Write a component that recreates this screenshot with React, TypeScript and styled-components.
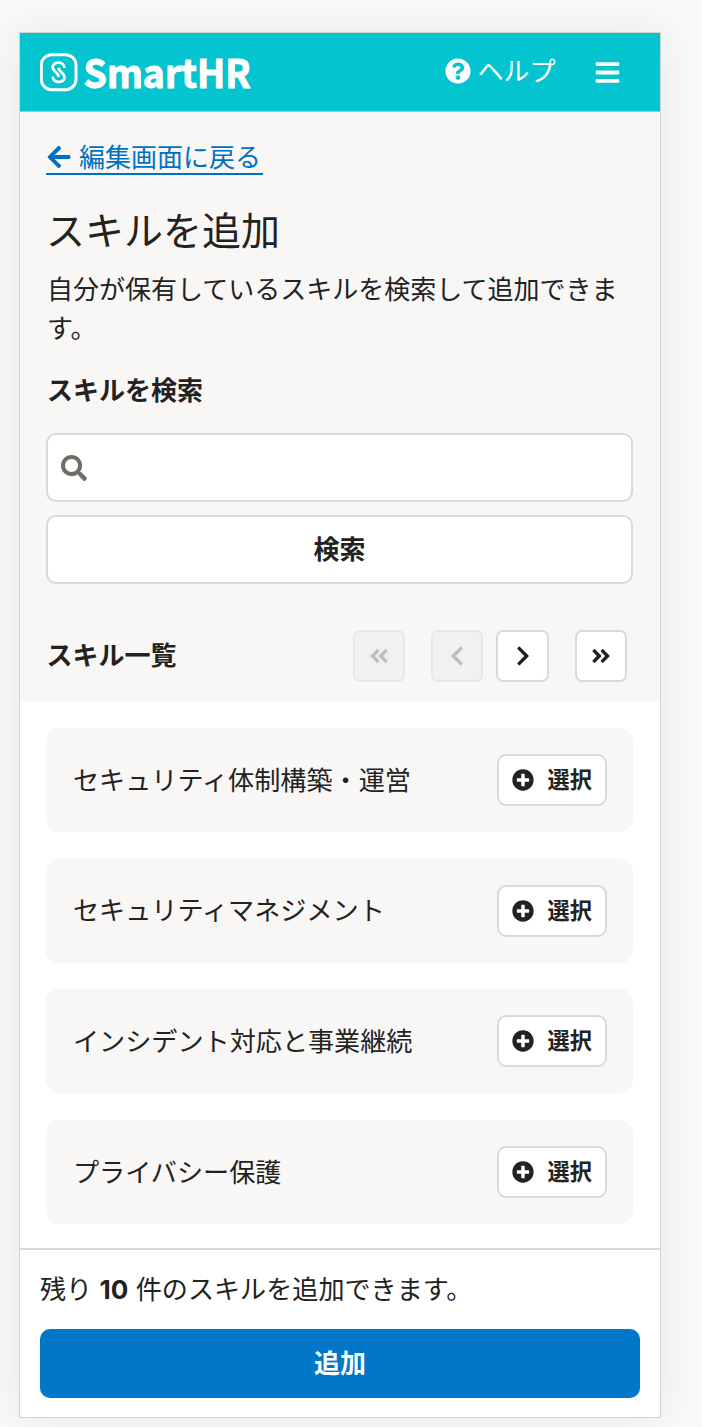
import React from "react";
import styled, { createGlobalStyle, css } from "styled-components";
import {
  FaAngleDoubleLeft,
  FaAngleDoubleRight,
  FaArrowLeft,
  FaBars,
  FaChevronLeft,
  FaChevronRight,
  FaPlusCircle,
  FaQuestionCircle,
  FaSearch,
} from "react-icons/fa";

const GlobalStyle = createGlobalStyle`
  *, *::before, *::after { box-sizing: border-box; }
  html { background: #f8fafa; }
  body {
    margin: 0;
    color: #23221e;
    font-family: Inter, "Noto Sans CJK JP", sans-serif;
    font-size: 26px;
    line-height: 39px;
    overflow: hidden;
  }
  button, input { font: inherit; color: inherit; }
  svg { display: block; flex: none; }
  h1, h2, p, ul { margin: 0; padding: 0; }
`;

const Stage = styled.div`
  height: 1427px;
  padding: 32px 41px 9px 19px;
  overflow: hidden;
`;

const Screen = styled.main`
  display: flex;
  flex-direction: column;
  height: 1386px;
  background: #fff;
  border: 1px solid #d1d3d3;
  box-shadow: 0 0 40px rgba(0, 0, 0, 0.075);
`;

const Header = styled.header`
  display: flex;
  align-items: center;
  height: 79px;
  padding: 0 39px 0 20px;
  background: #04c4cf;
  border-bottom: 1px solid #6fdce2;
  color: #fff;
`;

const HelpLink = styled.a`
  display: flex;
  align-items: center;
  gap: 6px;
  margin: -1px 38.5px 0 auto;
  svg {
    margin-top: -2px;
  }
`;

const SearchSection = styled.section`
  height: 589px;
  padding: 26px 27px 0 27px;
  background: #f8f7f5;
`;

const BackLink = styled.a`
  display: inline-flex;
  align-items: center;
  gap: 7px;
  height: 37px;
  padding: 3px 2px 0 0;
  margin-left: -1px;
  border-bottom: 2px solid #0071c1;
  color: #0071c1;
`;

const Title = styled.h1`
  margin: 25px 0 0 -1px;
  font-size: 39px;
  line-height: 52px;
  font-weight: 400;
`;

const Description = styled.p`
  margin: 13px -6px 23px 0;
`;

const Label = styled.h2`
  font-size: 26px;
  line-height: 39px;
  font-weight: 700;
`;

const outlined = css`
  background: #fff;
  border: 2px solid #dad9d6;
`;

const SearchField = styled.div`
  ${outlined}
  display: flex;
  align-items: center;
  gap: 12px;
  height: 69px;
  margin: 23px 0 0 -1px;
  padding: 0 13px;
  border-radius: 10px;
  color: #706d65;
`;

const SearchInput = styled.input`
  flex: 1;
  min-width: 0;
  padding: 0;
  border: 0;
  outline: 0;
  background: transparent;
`;

const WideButton = styled.button<{ $primary?: boolean }>`
  ${outlined}
  display: block;
  width: 100%;
  height: 69px;
  padding: 0;
  border-radius: 10px;
  font-weight: 700;
  ${({ $primary }) =>
    $primary &&
    css`
      background: #0077c7;
      border: 0;
      color: #fff;
    `}
`;

const SearchAction = styled.div`
  margin: 13px 0 0 -1px;
`;

const ListHeading = styled.div`
  display: flex;
  align-items: center;
  justify-content: space-between;
  margin: 46px 6px 0 -0.5px;

  ${Label} {
    margin-top: -2px;
  }
`;

const Pager = styled.div`
  display: flex;
  gap: 26px;
`;

const PagerStep = styled.div`
  display: flex;
  gap: 13px;
`;

const PageButton = styled.button`
  ${outlined}
  display: flex;
  align-items: center;
  justify-content: center;
  width: 52.3px;
  height: 52px;
  padding: 0;
  border-radius: 7px;
  &:disabled {
    background: #f1f1f1;
    border-color: #e8e7e5;
    color: #c1bdb7;
  }
`;

const SkillList = styled.ul`
  display: flex;
  flex-direction: column;
  gap: 26.7px;
  height: 547px;
  padding: 27px 27px 0 26px;
  font-size: 26.12px;
  list-style: none;
`;

const SkillRow = styled.li`
  display: flex;
  align-items: center;
  justify-content: space-between;
  height: 104px;
  padding: 0 26px 0 27px;
  border-radius: 13px;
  background: #f8f7f5;
`;

const SelectButton = styled.button`
  ${outlined}
  display: flex;
  align-items: center;
  gap: 13.5px;
  width: 110px;
  height: 52px;
  padding: 0 0 0 13px;
  border-radius: 9px;
  font-size: 22.2px;
  line-height: 30px;
  font-weight: 700;
`;

const Footer = styled.footer`
  flex: 1;
  padding: 20px 20px 0;
  border-top: 2px solid #d9d8d7;
`;

const Remaining = styled.p`
  margin-bottom: 20px;
  font-size: 26.1px;
`;

const Logo = () => (
  <svg width="222" height="76" viewBox="0 -14 222 76" role="img" aria-label="SmartHR">
    <rect x="1.3" y="6.7" width="34.7" height="35" rx="10.5" fill="none" stroke="#fff" strokeWidth="3" />
    <g transform="translate(0 .3)" fill="none" stroke="#fff" strokeWidth="2.8">
      <path d="M24.4 19.6C24.4 12.7 12.7 12.7 12.7 19.2C12.7 23.6 18.6 23.8 18.7 28.6" />
      <path d="M12.9 28.4C12.9 35.3 24.6 35.3 24.6 28.8C24.6 24.4 18.7 24.2 18.6 19.4" />
    </g>
    <text
      x="43.6"
      y="39.7"
      fill="#fff"
      fontFamily="'Noto Sans CJK JP', sans-serif"
      fontSize="39.5"
      fontWeight="700"
      stroke="#fff"
      strokeWidth="1.1"
      textLength="167"
      lengthAdjust="spacingAndGlyphs"
    >
      SmartHR
    </text>
  </svg>
);

const skills = [
  "セキュリティ体制構築・運営",
  "セキュリティマネジメント",
  "インシデント対応と事業継続",
  "プライバシー保護",
];

export default function App() {
  return (
    <>
      <GlobalStyle />
      <Stage>
        <Screen>
          <Header>
            <Logo />
            <HelpLink>
              <FaQuestionCircle size={26} />
              ヘルプ
            </HelpLink>
            <FaBars size={27} />
          </Header>
          <SearchSection>
            <BackLink>
              <FaArrowLeft size={26} />
              編集画面に戻る
            </BackLink>
            <Title>スキルを追加</Title>
            <Description>自分が保有しているスキルを検索して追加できます。</Description>
            <Label>スキルを検索</Label>
            <SearchField>
              <FaSearch size={26} />
              <SearchInput aria-label="スキルを検索" />
            </SearchField>
            <SearchAction>
              <WideButton>検索</WideButton>
            </SearchAction>
            <ListHeading>
              <Label>スキル一覧</Label>
              <Pager>
                <PageButton disabled aria-label="最初へ">
                  <FaAngleDoubleLeft size={22} />
                </PageButton>
                <PagerStep>
                  <PageButton disabled aria-label="前へ">
                    <FaChevronLeft size={22} />
                  </PageButton>
                  <PageButton aria-label="次へ">
                    <FaChevronRight size={22} />
                  </PageButton>
                </PagerStep>
                <PageButton aria-label="最後へ">
                  <FaAngleDoubleRight size={22} />
                </PageButton>
              </Pager>
            </ListHeading>
          </SearchSection>
          <SkillList>
            {skills.map((skill) => (
              <SkillRow key={skill}>
                {skill}
                <SelectButton>
                  <FaPlusCircle size={22} />
                  選択
                </SelectButton>
              </SkillRow>
            ))}
          </SkillList>
          <Footer>
            <Remaining>
              残り <b>10</b> 件のスキルを追加できます。
            </Remaining>
            <WideButton $primary>追加</WideButton>
          </Footer>
        </Screen>
      </Stage>
    </>
  );
}
